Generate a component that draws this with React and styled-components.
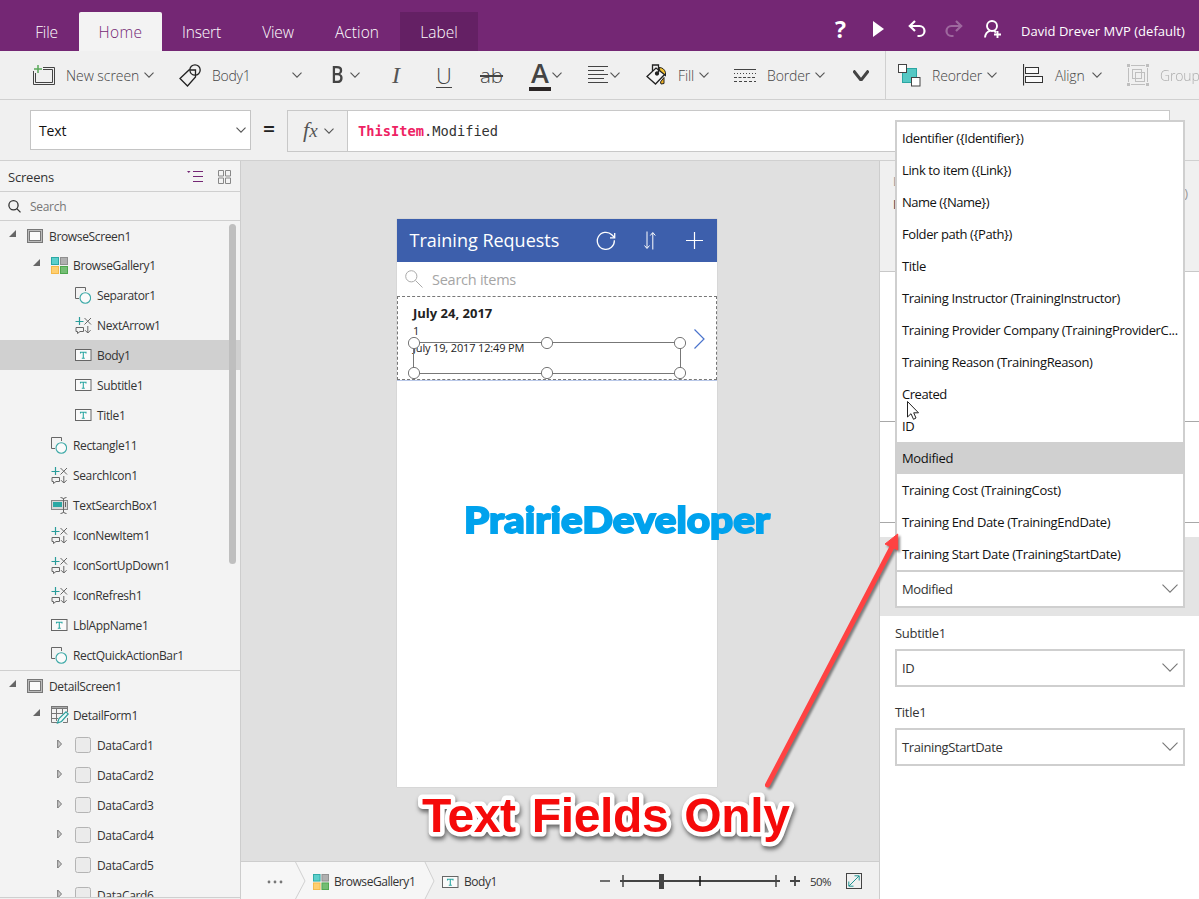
import styled, { createGlobalStyle, css } from "styled-components";

const GlobalStyle = createGlobalStyle`
  * {
    box-sizing: border-box;
  }
  body {
    margin: 0;
    overflow: hidden;
    font-family: "Open Sans", "Noto Sans", sans-serif;
    font-size: 12px;
    color: #333;
  }
  svg {
    display: block;
    flex-shrink: 0;
  }
`;

const Page = styled.div`
  position: relative;
  width: 1199px;
  height: 899px;
  display: flex;
  flex-direction: column;
  overflow: hidden;
  background: #f0f0f0;
`;

/* ---------- top bar ---------- */

const TopBar = styled.header`
  height: 51px;
  flex-shrink: 0;
  display: flex;
  align-items: flex-end;
  background: #742774;
  color: #fff;
`;

const Tab = styled.div`
  width: ${(p) => p.$w}px;
  height: 39px;
  margin-left: ${(p) => p.$ml || 0}px;
  padding-top: 1px;
  display: flex;
  align-items: center;
  justify-content: center;
  font-size: 15.5px;
  font-weight: 300;
  letter-spacing: ${(p) => p.$ls ?? -0.2}px;
  color: #fff;
  ${(p) =>
    p.$active &&
    css`
      background: #f3f3f3;
      color: #742774;
      border-radius: 2px 2px 0 0;
    `}
  ${(p) =>
    p.$context &&
    css`
      background: #642064;
    `}
`;

const TopActions = styled.div`
  height: 51px;
  margin-left: auto;
  display: flex;
  align-items: center;
  padding: 7px 0 0;
`;

const Help = styled.span`
  width: 38px;
  font-size: 23px;
  line-height: 30px;
  font-weight: 700;
`;

const UserName = styled.span`
  width: 178px;
  padding-top: 3px;
  font-size: 13px;
  line-height: 20px;
  letter-spacing: ${(p) => p.$ls}px;
  white-space: nowrap;
`;

const Spacer = styled.div`
  width: ${(p) => p.$w}px;
  flex-shrink: 0;
`;

/* ---------- ribbon ---------- */

const Ribbon = styled.div`
  height: 49px;
  flex-shrink: 0;
  display: flex;
  align-items: center;
  padding-left: 33px;
  border-bottom: 1px solid #d0d0d0;
  color: #444;
  overflow: hidden;
`;

const Tool = styled.div`
  height: 48px;
  display: flex;
  align-items: center;
  flex-shrink: 0;
  margin-right: ${(p) => p.$mr || 0}px;
  opacity: ${(p) => (p.$disabled ? 0.4 : 1)};
`;

const ToolLabel = styled.span`
  width: ${(p) => p.$w}px;
  padding-left: ${(p) => p.$pl ?? 11}px;
  font-size: 14px;
  font-weight: 300;
  letter-spacing: ${(p) => p.$ls ?? -0.15}px;
  white-space: nowrap;
`;

const Glyph = styled.span`
  width: ${(p) => p.$w}px;
  font-size: 21px;
  line-height: 28px;
  white-space: nowrap;
  flex-shrink: 0;
`;

const BoldGlyph = styled(Glyph)`
  font-weight: 600;
  font-size: 22.5px;
  transform: scaleX(0.85);
  transform-origin: left;
`;

const ItalicGlyph = styled(Glyph)`
  padding-left: 1px;
  font-family: "Liberation Serif", serif;
  font-style: italic;
  font-size: 24px;
  color: #555;
`;

const UnderlineGlyph = styled.span`
  width: 16px;
  height: 23px;
  margin-top: 3px;
  display: flex;
  justify-content: center;
  border-bottom: 1px solid #444;
  font-size: 22px;
  font-weight: 300;
  line-height: 21px;
`;

const StrikeGlyph = styled(Glyph)`
  font-size: 20.5px;
  font-weight: 300;
  text-decoration: line-through;
`;

const ColorGlyph = styled.span`
  width: 22px;
  height: 29px;
  margin-top: 2px;
  display: flex;
  justify-content: center;
  border-bottom: 4px solid #2b2626;
  font-size: 27px;
  line-height: 22px;
  font-weight: 600;
`;

const Divider = styled.div`
  width: 1px;
  height: 48px;
  flex-shrink: 0;
  background: #d0d0d0;
`;

/* ---------- formula bar ---------- */

const FormulaBar = styled.div`
  height: 61px;
  flex-shrink: 0;
  display: flex;
  align-items: flex-start;
  padding: 10px 0 0 30px;
  border-bottom: 1px solid #d0d0d0;
`;

const PropertySelect = styled.div`
  width: 221px;
  height: 40px;
  display: flex;
  align-items: center;
  justify-content: space-between;
  padding: 0 4px 0 8px;
  border: 1px solid #c4c4c4;
  background: #fff;
  color: #111;
  font-size: 14px;
  letter-spacing: -0.1px;
`;

const Equals = styled.span`
  width: 36px;
  height: 40px;
  text-align: center;
  font-size: 21px;
  line-height: 38px;
  font-weight: 600;
  color: #222;
`;

const FxButton = styled.div`
  width: 61px;
  height: 42px;
  display: flex;
  align-items: center;
  padding-left: 15px;
  border: 1px solid #c8c8c8;
  font-family: "Liberation Serif", serif;
  font-style: italic;
  color: #555;
`;

const FxText = styled.span`
  width: 21px;
  font-size: 22px;
  line-height: 28px;
  margin-top: -2px;

  small {
    font-size: 19px;
  }
`;

const FormulaInput = styled.div`
  width: 822px;
  height: 42px;
  display: flex;
  align-items: center;
  padding-left: 10px;
  border: 1px solid #c8c8c8;
  border-left: none;
  background: #fff;
  font-family: "DejaVu Sans Mono", monospace;
  font-size: 13.7px;
  color: #333;

  b {
    color: #ee2263;
  }
`;

/* ---------- workspace ---------- */

const Workspace = styled.div`
  flex: 1;
  min-height: 0;
  display: flex;
`;

const TreePanel = styled.aside`
  position: relative;
  width: 241px;
  flex-shrink: 0;
  border-right: 1px solid #cdcdcd;
  background: #f3f3f3;
  overflow: hidden;
`;

const TreeHeader = styled.div`
  height: 31px;
  display: flex;
  align-items: center;
  padding: 1px 8px 0 8px;
  border-bottom: 1px solid #cfcfcf;
  font-size: 13px;
  letter-spacing: -0.2px;
  color: #333;
`;

const TreeSearch = styled.div`
  height: 29px;
  display: flex;
  align-items: center;
  gap: 9px;
  padding-left: 8px;
  border-bottom: 1px solid #cfcfcf;
  font-size: 12px;
  letter-spacing: -0.3px;
  color: #777;
`;

const TreeRow = styled.div`
  height: ${(p) => (p.$level === 0 ? 29 : 30)}px;
  display: flex;
  align-items: center;
  padding-left: ${(p) => p.$level * 24 + 9}px;
  background: ${(p) => (p.$selected ? "#d0d0d0" : "transparent")};
  ${(p) =>
    p.$ruled &&
    css`
      height: 30px;
      border-top: 1px solid #cfcfcf;
    `}
`;

const TreeArrow = styled.span`
  width: 18px;
  height: 12px;
`;

const TreeIcon = styled.span`
  width: 22px;
`;

const TreeName = styled.span`
  padding-top: ${(p) => (p.$nested ? 0 : 2)}px;
  letter-spacing: -0.35px;
  white-space: nowrap;
`;

const Scrollbar = styled.div`
  position: absolute;
  left: 229px;
  top: 63px;
  width: 7px;
  height: 340px;
  border-radius: 4px;
  background: #bfbfbf;
`;

const PanelFoot = styled.div`
  position: absolute;
  left: 0;
  bottom: 0;
  width: 240px;
  height: 2px;
  border-top: 1px solid #cfcfcf;
  background: #f0f0f0;
`;

const Center = styled.main`
  width: 638px;
  flex-shrink: 0;
  display: flex;
  flex-direction: column;
`;

const Stage = styled.div`
  flex: 1;
  padding: 58px 0 0 156px;
  background: #e0e0e0;
`;

const Phone = styled.div`
  position: relative;
  width: 320px;
  height: 568px;
  background: #fff;
  box-shadow: 0 0 1px #aaa;
`;

const AppBar = styled.div`
  height: 43px;
  display: flex;
  align-items: center;
  padding: 0 14px 0 12.5px;
  background: #3d5fac;
  color: #fff;
`;

const AppTitle = styled.span`
  width: 187px;
  padding-bottom: 2px;
  font-size: 18px;
  letter-spacing: ${(p) => p.$ls}px;
`;

const AppSearch = styled.div`
  height: 34px;
  display: flex;
  align-items: center;
  gap: 9px;
  padding-left: 8px;
  font-size: 14.5px;
  letter-spacing: -0.25px;
  color: #a5a5a5;
`;

const GalleryItem = styled.div`
  height: 84px;
  position: relative;
  display: flex;
  justify-content: space-between;
  padding: 0 11.5px 0 15px;
  border: 1px dashed #777;
  box-shadow: 0 1px 0 #b9c8e8;
  color: #222;
`;

const ItemText = styled.div`
  display: flex;
  flex-direction: column;
  padding-top: 7px;
  font-size: 11px;
  line-height: 17px;
  letter-spacing: -0.15px;

  b {
    font-size: 13px;
    line-height: 18px;
    letter-spacing: 0;
  }
`;

const ItemArrow = styled.div`
  padding-top: 32px;
`;

const Selection = styled.svg`
  position: absolute;
  left: 10px;
  top: 40px;
`;

const Watermark = styled.div`
  position: absolute;
  left: 464px;
  top: 493px;
  font-family: Lato, sans-serif;
  font-weight: 900;
  font-size: 36.5px;
  line-height: 52px;
  color: #00a2ed;
  -webkit-text-stroke: 1.8px #00a2ed;
  transform: scaleX(1.108);
  transform-origin: left;
  white-space: nowrap;
`;

const StatusBar = styled.footer`
  height: 38px;
  display: flex;
  align-items: center;
  border-top: 1px solid #cdcdcd;
  background: #f0f0f0;
`;

const Crumb = styled.div`
  height: 37px;
  width: ${(p) => p.$w}px;
  display: flex;
  align-items: center;
  gap: 5px;
  padding: 2px 0 0 ${(p) => p.$pl}px;
  background: ${(p) => (p.$last ? "#f0f0f0" : "#f6f6f6")};
  letter-spacing: -0.45px;
`;

const CrumbEdge = styled.svg`
  background: ${(p) => p.$next};
`;

const Zoom = styled.div`
  display: flex;
  align-items: center;
  margin-left: auto;
  padding-top: 1px;
`;

const ZoomValue = styled.span`
  width: 46px;
  padding-left: 10px;
  font-size: 11.5px;
  letter-spacing: -0.6px;
`;

/* ---------- properties ---------- */

const Properties = styled.aside`
  flex: 1;
  border-left: 1px solid #cdcdcd;
  background: #fff;
  display: flex;
  flex-direction: column;
`;

const PropHead = styled.div`
  height: 111px;
  display: flex;
  justify-content: space-between;
  padding: 9px 11px 0 13px;
  border-bottom: 1px solid #c8c8c8;
  background: #f0f0f0;
  color: #999;
`;

const PropCaption = styled.div`
  display: flex;
  flex-direction: column;
  line-height: 23px;
  font-size: 12px;

  span + span {
    color: #444;
  }
`;

const Closing = styled.span`
  padding-top: 14px;
  font-size: 13px;
`;

const PropGap = styled.div`
  height: ${(p) => p.$h}px;
  border-bottom: ${(p) => (p.$line ? "1px solid #a8a8a8" : "none")};
`;

const Field = styled.div`
  height: 79px;
  padding: 8px 14px 0 15px;
  background: ${(p) => (p.$selected ? "#e4e4e4" : "#fff")};
`;

const FieldLabel = styled.div`
  height: 25px;
  line-height: 18px;
  font-size: 13px;
  letter-spacing: -0.3px;
`;

const FieldSelect = styled.div`
  height: 38px;
  display: flex;
  align-items: center;
  justify-content: space-between;
  padding: 0 5px 0 5px;
  border: 2px solid #cfcfcf;
  background: #fff;
  font-size: 13px;
  letter-spacing: -0.38px;

  svg {
    margin-bottom: 2px;
  }
`;

const Menu = styled.ul`
  position: absolute;
  left: 895px;
  top: 120px;
  width: 290px;
  height: 452px;
  margin: 0;
  padding: 0;
  list-style: none;
  border: 2px solid #cfcfcf;
  background: #fff;
`;

const MenuItem = styled.li`
  height: 32px;
  padding-left: 5px;
  line-height: 32px;
  font-size: 13px;
  letter-spacing: ${(p) => p.$ls}px;
  white-space: nowrap;
  color: #111;
  background: ${(p) => (p.$selected ? "#d0d0d0" : "transparent")};
`;

/* ---------- annotations ---------- */

const Overlay = styled.svg`
  position: absolute;
  left: ${(p) => p.$x}px;
  top: ${(p) => p.$y}px;
`;

const ArrowOverlay = styled(Overlay)`
  filter: drop-shadow(2px 2px 1px rgba(0, 0, 0, 0.45));
`;

const Callout = styled(Overlay)`
  filter: drop-shadow(1px 3px 2px rgba(0, 0, 0, 0.55));

  text {
    font-family: "Liberation Sans", Arial, sans-serif;
    font-weight: 700;
    font-size: 48px;
    letter-spacing: -0.35px;
    word-spacing: 3px;
    fill: #f50a0a;
    stroke: #fff;
    stroke-width: 9px;
    stroke-linejoin: round;
    paint-order: stroke fill;
  }
`;

/* ---------- icons ---------- */

const Chevron = ({ w = 10, h = 6, color = "#555", sw = 1.1 }) => (
  <svg width={w} height={h} fill="none" stroke={color} strokeWidth={sw}>
    <path d={`M0.5 0.6 L${w / 2} ${h - 0.8} L${w - 0.5} 0.6`} />
  </svg>
);

const NewScreenIcon = () => (
  <svg width="22" height="22" viewBox="0 0 22 22" fill="none" stroke="#444">
    <path d="M10 3.5H21.5V20.5H0.5V7" />
    <path d="M10 5.5H19.5V18.5H2.5V9" />
    <path d="M5 1V9M1 5H9" stroke="#5aa85a" strokeWidth="1.5" />
  </svg>
);

const TagIcon = () => (
  <svg width="22" height="23" viewBox="0 0 22 23" fill="none" stroke="#222" strokeWidth="1.3">
    <circle cx="16" cy="6" r="5.2" />
    <path d="M1 14.5L10 6H16.5V13L8.5 22Z" fill="#f0f0f0" />
    <path d="M10.9 6.5A5.2 5.2 0 0 0 16 11.2" />
  </svg>
);

const AlignTextIcon = () => (
  <svg width="20" height="18" viewBox="0 0 20 18" stroke="#444">
    <path d="M0 0.5H20M0 4.5H16M0 8.5H20M0 12.5H16M0 16.5H20" />
  </svg>
);

const FillIcon = () => (
  <svg width="22" height="23" viewBox="0 0 22 23" fill="none" stroke="#222" strokeWidth="1.3">
    <path d="M13 3.5Q18 3.5 19.5 8.5V12L14 7Z" fill="#f0c030" strokeWidth="1" />
    <path d="M14.5 18L18 13.5V19.5L15 20Z" fill="#f0b020" strokeWidth="1" />
    <path d="M1 12.5L10 4L18.5 10.5L9.5 20Z" fill="#f5f5f5" />
    <path d="M6.5 7V1H12.5V8.5" />
    <circle cx="11" cy="9.5" r="1.5" fill="#222" />
  </svg>
);

const BorderIcon = () => (
  <svg width="22" height="13" viewBox="0 0 22 13" stroke="#444">
    <path d="M0 0.5H22" />
    <path d="M0 4.5H22" strokeDasharray="1 2" />
    <path d="M0 8.5H22" strokeDasharray="3 1.5" />
    <path d="M0 12.5H22" strokeDasharray="3 2" />
  </svg>
);

const ReorderIcon = () => (
  <svg width="23" height="23" viewBox="0 0 23 23" stroke="#444">
    <rect x="4.5" y="4.5" width="14" height="14" fill="#55c8c4" stroke="#2aa6a2" />
    <rect x="0.5" y="0.5" width="8" height="8" fill="#fff" />
    <rect x="13.5" y="13.5" width="8.5" height="8.5" fill="#fff" />
  </svg>
);

const AlignIcon = () => (
  <svg width="21" height="22" viewBox="0 0 21 22" fill="#fafafa" stroke="#333">
    <path d="M0.5 0V21.5" strokeWidth="1.2" />
    <rect x="2.5" y="3.5" width="13" height="6" />
    <rect x="2.5" y="12.5" width="17" height="6" />
  </svg>
);

const GroupIcon = () => (
  <svg width="22" height="22" viewBox="0 0 22 22" fill="none" stroke="#777">
    <path d="M4 1.5H18M4 20.5H18M1.5 4V18M20.5 4V18" />
    <rect x="5.5" y="5.5" width="9" height="9" />
    <rect x="8.5" y="8.5" width="9" height="9" />
    <path d="M0 1.5H3M19 1.5H22M0 20.5H3M19 20.5H22" strokeWidth="3" />
  </svg>
);

const PlayIcon = () => (
  <svg width="11" height="16" fill="#fff">
    <path d="M0 0L11 8L0 16Z" />
  </svg>
);

const UndoIcon = ({ flip, faded }) => (
  <svg width="18" height="18" viewBox="0 0 18 18" fill="none" stroke="#fff" strokeWidth="2.2" opacity={faded ? 0.3 : 1}>
    <g transform={flip ? "translate(18 0) scale(-1 1)" : undefined}>
      <path d="M1.5 6H11.5A5 5 0 0 1 11.5 16H9.5" />
      <path d="M7 1L1.8 6L7 11" />
    </g>
  </svg>
);

const UserIcon = () => (
  <svg width="18" height="18" viewBox="0 0 18 18" fill="none" stroke="#fff" strokeWidth="1.9">
    <circle cx="8" cy="6" r="5" />
    <path d="M1 17.5Q1.5 12 6 10.8M10 10.8L12 12.5M10 14.5H17M13.5 11V18" />
  </svg>
);

const ListIcon = () => (
  <svg width="16" height="12" viewBox="0 0 16 12" stroke="#742774">
    <path d="M6 0.5H16M6 5.5H16M6 10.5H16" strokeWidth="1" />
    <path d="M0 0L3.5 0L1.75 2Z" fill="#742774" stroke="none" />
  </svg>
);

const TilesIcon = () => (
  <svg width="14" height="14" viewBox="0 0 14 14" fill="none" stroke="#888">
    <path d="M0.5 0.5H5.5V6H0.5ZM7.5 0.5H12.5V6H7.5ZM0.5 8H5.5V13.5H0.5ZM7.5 8H12.5V13.5H7.5Z" />
  </svg>
);

const SearchIcon = () => (
  <svg width="13" height="13" viewBox="0 0 13 13" fill="none" stroke="#333" strokeWidth="1.3">
    <circle cx="5.5" cy="5.3" r="4.6" />
    <path d="M8.8 8.6L12.5 12.4" />
  </svg>
);

const ScreenIcon = () => (
  <svg width="17" height="14" viewBox="0 0 17 14" fill="none" stroke="#777">
    <rect x="0.5" y="0.5" width="15" height="13" />
    <rect x="1.5" y="1.5" width="13" height="11" stroke="#bbb" />
    <rect x="2.5" y="2.5" width="11" height="9" fill="#fafafa" />
  </svg>
);

const GalleryIcon = ({ size = 17 }) => (
  <svg width={size} height={size} viewBox="0 0 17 17">
    <rect x="0.5" y="0.5" width="7" height="7" fill="#5ccfcb" stroke="#2ba8a4" />
    <rect x="9.5" y="0.5" width="7" height="7" fill="#b0b0b0" stroke="#8f8f8f" />
    <rect x="0.5" y="9.5" width="7" height="7" fill="#ffcf70" stroke="#f5b848" />
    <rect x="9.5" y="9.5" width="7" height="7" fill="#74bd74" stroke="#4da64d" />
  </svg>
);

const ShapeIcon = () => (
  <svg width="16" height="17" viewBox="0 0 16 17" fill="none">
    <path d="M4 11.5H0.5V0.5H10.5V4" stroke="#666" />
    <circle cx="10.3" cy="11" r="5.3" stroke="#3aa8a6" strokeWidth="1.1" fill="#fafafa" />
  </svg>
);

const GlyphsIcon = () => (
  <svg width="17" height="17" viewBox="0 0 17 17" fill="none" stroke="#666">
    <path d="M4.5 0V8M0.5 4.5H8.5" stroke="#2a9d9b" strokeWidth="1.2" />
    <path d="M9.5 1L16 7.5M16 1L9.5 7.5M12.8 9V16M10 13.2L12.8 16L15.6 13.2" />
    <path d="M1 10.5H8.5V14.5H5L2.5 16.5V14.5H1Z" />
  </svg>
);

const LabelIcon = () => (
  <svg width="17" height="12" viewBox="0 0 17 12" fill="#fafafa" stroke="#666">
    <rect x="0.5" y="0.5" width="15.5" height="11" />
    <path d="M5.5 4.6V3.3H11V4.6M8.3 3.3V9.2M6.8 9.2H9.8" stroke="#2aa6a2" strokeWidth="1.1" fill="none" />
  </svg>
);

const InputIcon = () => (
  <svg width="17" height="17" viewBox="0 0 17 17" fill="none" stroke="#666">
    <rect x="0.5" y="3.5" width="16" height="9" fill="#d8d8d8" stroke="#888" />
    <rect x="2.5" y="5.5" width="8" height="4" fill="#2ba8a4" stroke="#2ba8a4" />
    <path d="M12.5 1.5V15.5M9.5 0.5Q12.5 0.5 12.5 2.5Q12.5 0.5 15.5 0.5M9.5 16.5Q12.5 16.5 12.5 14.5Q12.5 16.5 15.5 16.5M14.5 5V10" />
  </svg>
);

const FormIcon = () => (
  <svg width="18" height="18" viewBox="0 0 18 18" fill="none" stroke="#777">
    <rect x="0.5" y="0.5" width="16" height="2" fill="#aaa" />
    <path d="M0.5 3V16.5H6M16.5 3V6M5.5 3V15M11.5 3V8M0.5 7.5H12M0.5 12.5H7M16.5 12V16.5H12" />
    <path d="M6.5 17L8 12.5L15 5.8L17.2 8L10.5 15.5Z" stroke="#2a9d9b" fill="#eefafa" strokeWidth="1.2" />
  </svg>
);

const CardIcon = () => (
  <svg width="16" height="16" viewBox="0 0 16 16">
    <rect x="0.5" y="0.5" width="15" height="15" rx="2" fill="#ebebeb" stroke="#b4b4b4" />
  </svg>
);

const ExpandedArrow = () => (
  <svg width="8" height="8" viewBox="0 0 8 8">
    <path d="M7 0V7H0Z" fill="#666" />
  </svg>
);

const CollapsedArrow = () => (
  <svg width="8" height="10" viewBox="0 0 8 10">
    <path d="M0.7 1L4.5 5L0.7 9Z" fill="#ccc" stroke="#777" />
  </svg>
);

const RefreshIcon = () => (
  <svg width="20" height="20" viewBox="0 0 20 20" fill="none" stroke="#fff" strokeWidth="1.3">
    <path d="M18.3 9.2A8.5 8.5 0 1 1 15.8 3.8L18.5 6.5" />
    <path d="M18.7 2V6.8H14" />
  </svg>
);

const SortIcon = () => (
  <svg width="12" height="19" viewBox="0 0 12 19" fill="none" stroke="#fff">
    <path d="M3 0.5V17M0.5 14.5L3 17.5L5.5 14.5M8.8 18.5V2M6.3 4.5L8.8 1.5L11.3 4.5" />
  </svg>
);

const AddIcon = () => (
  <svg width="17" height="17" viewBox="0 0 17 17" stroke="#fff" strokeWidth="1.2">
    <path d="M8.5 0V17M0 8.5H17" />
  </svg>
);

const FaintSearchIcon = () => (
  <svg width="18" height="18" viewBox="0 0 18 18" fill="none" stroke="#aaa" strokeWidth="1">
    <circle cx="6.3" cy="6.3" r="5.6" />
    <path d="M10.5 10.5L17.5 17.5" />
  </svg>
);

const ZoomSlider = () => (
  <svg width="200" height="18" viewBox="0 0 200 18" stroke="#444">
    <path d="M0 9H10" strokeWidth="1.5" />
    <path d="M20 9H180" strokeWidth="2" />
    <path d="M23 3V15M176 3V15" strokeWidth="1.5" />
    <path d="M100 4V14" stroke="#111" strokeWidth="1.5" />
    <path d="M61.5 2V17" strokeWidth="5" />
    <path d="M190 9H200M195 4V14" strokeWidth="1.8" />
  </svg>
);

const FitIcon = () => (
  <svg width="16" height="16" viewBox="0 0 16 16" fill="none" stroke="#444">
    <rect x="0.5" y="0.5" width="15" height="15" />
    <path d="M3 13L13 3M8.5 2.8H13.2V7.5M2.8 8.5V13.2H7.5" stroke="#1f9391" />
  </svg>
);

/* ---------- data ---------- */

const icons = {
  screen: ScreenIcon,
  gallery: GalleryIcon,
  shape: ShapeIcon,
  glyphs: GlyphsIcon,
  label: LabelIcon,
  input: InputIcon,
  form: FormIcon,
  card: CardIcon,
};

const tree = [
  { name: "BrowseScreen1", level: 0, icon: "screen", arrow: "open" },
  { name: "BrowseGallery1", level: 1, icon: "gallery", arrow: "open" },
  { name: "Separator1", level: 2, icon: "shape" },
  { name: "NextArrow1", level: 2, icon: "glyphs" },
  { name: "Body1", level: 2, icon: "label", selected: true },
  { name: "Subtitle1", level: 2, icon: "label" },
  { name: "Title1", level: 2, icon: "label" },
  { name: "Rectangle11", level: 1, icon: "shape" },
  { name: "SearchIcon1", level: 1, icon: "glyphs" },
  { name: "TextSearchBox1", level: 1, icon: "input" },
  { name: "IconNewItem1", level: 1, icon: "glyphs" },
  { name: "IconSortUpDown1", level: 1, icon: "glyphs" },
  { name: "IconRefresh1", level: 1, icon: "glyphs" },
  { name: "LblAppName1", level: 1, icon: "label" },
  { name: "RectQuickActionBar1", level: 1, icon: "shape" },
  { name: "DetailScreen1", level: 0, icon: "screen", arrow: "open", ruled: true },
  { name: "DetailForm1", level: 1, icon: "form", arrow: "open" },
  { name: "DataCard1", level: 2, icon: "card", arrow: "closed" },
  { name: "DataCard2", level: 2, icon: "card", arrow: "closed" },
  { name: "DataCard3", level: 2, icon: "card", arrow: "closed" },
  { name: "DataCard4", level: 2, icon: "card", arrow: "closed" },
  { name: "DataCard5", level: 2, icon: "card", arrow: "closed" },
  { name: "DataCard6", level: 2, icon: "card", arrow: "closed" },
];

const fields = [
  { name: "Identifier ({Identifier})", ls: -0.38 },
  { name: "Link to item ({Link})", ls: -0.38 },
  { name: "Name ({Name})", ls: -0.5 },
  { name: "Folder path ({Path})", ls: -0.4 },
  { name: "Title" },
  { name: "Training Instructor (TrainingInstructor)", ls: -0.36 },
  { name: "Training Provider Company (TrainingProviderC..." },
  { name: "Training Reason (TrainingReason)", ls: -0.36 },
  { name: "Created", ls: -0.45 },
  { name: "ID" },
  { name: "Modified", selected: true },
  { name: "Training Cost (TrainingCost)", ls: -0.28 },
  { name: "Training End Date (TrainingEndDate)" },
  { name: "Training Start Date (TrainingStartDate)" },
];

function Tree() {
  return tree.map((node) => {
    const Icon = icons[node.icon];
    return (
      <TreeRow key={node.name} $level={node.level} $selected={node.selected} $ruled={node.ruled}>
        <TreeArrow>
          {node.arrow === "open" && <ExpandedArrow />}
          {node.arrow === "closed" && <CollapsedArrow />}
        </TreeArrow>
        <TreeIcon>
          <Icon />
        </TreeIcon>
        <TreeName $nested={node.level > 0}>{node.name}</TreeName>
      </TreeRow>
    );
  });
}

function App() {
  return (
    <>
      <GlobalStyle />
      <Page>
        <TopBar>
          <Tab $w={31} $ml={31}>File</Tab>
          <Tab $w={83} $ml={17} $ls={0.4} $active>Home</Tab>
          <Tab $w={79}>Insert</Tab>
          <Tab $w={74}>View</Tab>
          <Tab $w={84} $ls={0.1}>Action</Tab>
          <Tab $w={78} $ml={1} $ls={0} $context>Label</Tab>
          <TopActions>
            <Help>?</Help>
            <PlayIcon />
            <Spacer $w={24} />
            <UndoIcon />
            <Spacer $w={19} />
            <UndoIcon flip faded />
            <Spacer $w={21} />
            <UserIcon />
            <Spacer $w={19} />
            <UserName $ls={0.02}>David Drever MVP (default)</UserName>
          </TopActions>
        </TopBar>

        <Ribbon>
          <Tool $mr={25}>
            <NewScreenIcon />
            <ToolLabel $w={89} $ls={-0.05}>New screen</ToolLabel>
            <Chevron />
          </Tool>
          <Tool $mr={29}>
            <TagIcon />
            <ToolLabel $w={91} $ls={-0.25}>Body1</ToolLabel>
            <Chevron />
          </Tool>
          <Tool $mr={31}>
            <BoldGlyph $w={19}>B</BoldGlyph>
            <Chevron />
          </Tool>
          <Tool $mr={35}>
            <ItalicGlyph $w={10}>I</ItalicGlyph>
          </Tool>
          <Tool $mr={28}>
            <UnderlineGlyph>U</UnderlineGlyph>
          </Tool>
          <Tool $mr={25}>
            <StrikeGlyph $w={24}>ab</StrikeGlyph>
          </Tool>
          <Tool $mr={26}>
            <ColorGlyph>A</ColorGlyph>
            <Spacer $w={1} />
            <Chevron />
          </Tool>
          <Tool $mr={26}>
            <AlignTextIcon />
            <Spacer $w={2} />
            <Chevron />
          </Tool>
          <Tool $mr={25}>
            <FillIcon />
            <ToolLabel $w={31} $pl={10}>Fill</ToolLabel>
            <Chevron />
          </Tool>
          <Tool $mr={28}>
            <BorderIcon />
            <ToolLabel $w={59}>Border</ToolLabel>
            <Chevron />
          </Tool>
          <Tool $mr={16}>
            <Chevron w={16} h={11} sw={3} color="#444" />
          </Tool>
          <Divider />
          <Spacer $w={12} />
          <Tool $mr={26}>
            <ReorderIcon />
            <ToolLabel $w={66}>Reorder</ToolLabel>
            <Chevron />
          </Tool>
          <Tool $mr={25}>
            <AlignIcon />
            <ToolLabel $w={48}>Align</ToolLabel>
            <Chevron />
          </Tool>
          <Tool $disabled>
            <GroupIcon />
            <ToolLabel $w={60}>Group</ToolLabel>
          </Tool>
        </Ribbon>

        <FormulaBar>
          <PropertySelect>
            Text
            <Chevron />
          </PropertySelect>
          <Equals>=</Equals>
          <FxButton>
            <FxText>
              f<small>x</small>
            </FxText>
            <Chevron />
          </FxButton>
          <FormulaInput>
            <b>ThisItem</b>.Modified
          </FormulaInput>
        </FormulaBar>

        <Workspace>
          <TreePanel>
            <TreeHeader>
              Screens
              <Spacer $w={133} />
              <ListIcon />
              <Spacer $w={15} />
              <TilesIcon />
            </TreeHeader>
            <TreeSearch>
              <SearchIcon />
              Search
            </TreeSearch>
            <Tree />
            <Scrollbar />
            <PanelFoot />
          </TreePanel>

          <Center>
            <Stage>
              <Phone>
                <AppBar>
                  <AppTitle $ls={0}>Training Requests</AppTitle>
                  <RefreshIcon />
                  <Spacer $w={28} />
                  <SortIcon />
                  <Spacer $w={30} />
                  <AddIcon />
                </AppBar>
                <AppSearch>
                  <FaintSearchIcon />
                  Search items
                </AppSearch>
                <GalleryItem>
                  <ItemText>
                    <b>July 24, 2017</b>
                    <span>1</span>
                    <span>July 19, 2017 12:49 PM</span>
                  </ItemText>
                  <ItemArrow>
                    <svg width="11" height="20" fill="none" stroke="#4a73cc" strokeWidth="1.2">
                      <path d="M0.5 0.5L10 10L0.5 19.5" />
                    </svg>
                  </ItemArrow>
                  <Selection width="280" height="44" fill="none" stroke="#777">
                    <rect x="5.5" y="5.5" width="267" height="31" />
                    {[6, 139, 272].map((x) => (
                      <g key={x} fill="#fff">
                        <circle cx={x} cy="6" r="5.6" />
                        <circle cx={x} cy="36" r="5.6" />
                      </g>
                    ))}
                  </Selection>
                </GalleryItem>
              </Phone>
            </Stage>
            <StatusBar>
              <Crumb $w={54} $pl={26}>
                <svg width="16" height="4" fill="#777">
                  <circle cx="2" cy="2" r="1.4" />
                  <circle cx="8" cy="2" r="1.4" />
                  <circle cx="14" cy="2" r="1.4" />
                </svg>
              </Crumb>
              <CrumbEdge $next="#f6f6f6" width="11" height="37" fill="none" stroke="#d0d0d0">
                <path d="M0.5 0L10 19L0.5 37" />
              </CrumbEdge>
              <Crumb $w={118} $pl={7}>
                <GalleryIcon size={16} />
                BrowseGallery1
              </Crumb>
              <CrumbEdge $next="#f0f0f0" width="11" height="37" stroke="#d0d0d0">
                <path d="M0.5 -1L10 19L0.5 38H-2V-1Z" fill="#f6f6f6" />
              </CrumbEdge>
              <Crumb $w={80} $pl={7} $last>
                <LabelIcon />
                Body1
              </Crumb>
              <Zoom>
                <ZoomSlider />
                <ZoomValue>50%</ZoomValue>
                <FitIcon />
                <Spacer $w={17} />
              </Zoom>
            </StatusBar>
          </Center>

          <Properties>
            <PropHead>
              <PropCaption>
                <span>L</span>
                <span>I</span>
              </PropCaption>
              <Closing>)</Closing>
            </PropHead>
            <PropGap $h={150} $line />
            <PropGap $h={101} $line />
            <PropGap $h={14} />
            <Field $selected>
              <FieldLabel />
              <FieldSelect>
                Modified
                <Chevron w={16} h={9} color="#777" />
              </FieldSelect>
            </Field>
            <Field>
              <FieldLabel>Subtitle1</FieldLabel>
              <FieldSelect>
                ID
                <Chevron w={16} h={9} color="#777" />
              </FieldSelect>
            </Field>
            <Field>
              <FieldLabel>Title1</FieldLabel>
              <FieldSelect>
                TrainingStartDate
                <Chevron w={16} h={9} color="#777" />
              </FieldSelect>
            </Field>
          </Properties>
        </Workspace>

        <Menu>
          {fields.map((f) => (
            <MenuItem key={f.name} $selected={f.selected} $ls={f.ls ?? -0.33}>
              {f.name}
            </MenuItem>
          ))}
        </Menu>

        <Overlay $x={906} $y={400} width="14" height="22" fill="#fff" stroke="#222">
          <path d="M1.5 1.5V17L5 13.7L7.5 19.3L10 18L7.7 12.8H12.5Z" />
        </Overlay>

        <Watermark>PrairieDeveloper</Watermark>
        <Callout $x={410} $y={780} width="400" height="80">
          <text x="12" y="52">Text Fields Only</text>
        </Callout>
        <ArrowOverlay $x={750} $y={520} width="160" height="280">
          <path d="M17.5 265L142 27" stroke="#ff4242" strokeWidth="5" strokeLinecap="round" />
          <path d="M147.7 14L135 24L147.7 30Z" fill="#ff4242" stroke="#ff4242" />
        </ArrowOverlay>
      </Page>
    </>
  );
}

export default App;
